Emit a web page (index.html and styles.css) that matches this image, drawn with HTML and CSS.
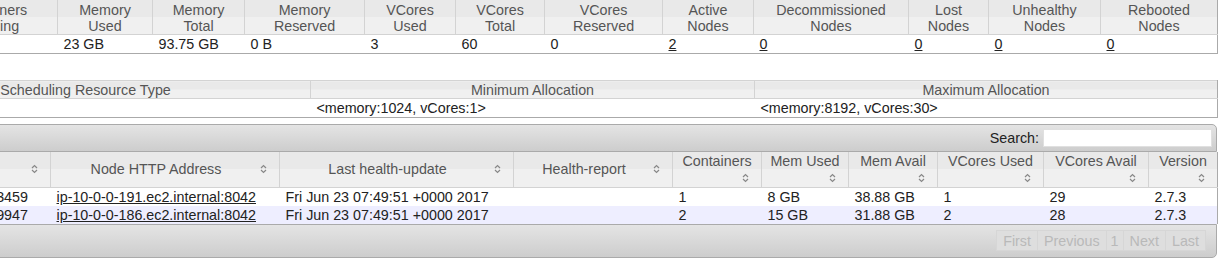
FILE: index.html
```html
<!DOCTYPE html>
<html lang="en">
<head>
  <meta charset="UTF-8">
  <title>Nodes of the cluster</title>
  <link rel="stylesheet" href="styles.css">
</head>
<body>
  <main class="content">

    <!-- Cluster metrics -->
    <table class="info metrics">
      <colgroup>
        <col style="width:130px"><col style="width:95px"><col style="width:92px"><col style="width:120px">
        <col style="width:91px"><col style="width:89px"><col style="width:118px"><col style="width:91px">
        <col style="width:155px"><col style="width:80px"><col style="width:112px"><col style="width:117px">
      </colgroup>
      <thead>
        <tr>
          <th>Containers Running</th>
          <th>Memory Used</th>
          <th>Memory Total</th>
          <th>Memory Reserved</th>
          <th>VCores Used</th>
          <th>VCores Total</th>
          <th>VCores Reserved</th>
          <th>Active Nodes</th>
          <th>Decommissioned Nodes</th>
          <th>Lost Nodes</th>
          <th>Unhealthy Nodes</th>
          <th>Rebooted Nodes</th>
        </tr>
      </thead>
      <tbody>
        <tr>
          <td>3</td>
          <td>23 GB</td>
          <td>93.75 GB</td>
          <td>0 B</td>
          <td>3</td>
          <td>60</td>
          <td>0</td>
          <td><a href="#">2</a></td>
          <td><a href="#">0</a></td>
          <td><a href="#">0</a></td>
          <td><a href="#">0</a></td>
          <td><a href="#">0</a></td>
        </tr>
      </tbody>
    </table>

    <!-- Scheduler metrics -->
    <table class="info scheduler">
      <colgroup>
        <col style="width:450px"><col style="width:444px"><col style="width:463px">
      </colgroup>
      <thead>
        <tr>
          <th>Scheduling Resource Type</th>
          <th>Minimum Allocation</th>
          <th>Maximum Allocation</th>
        </tr>
      </thead>
      <tbody>
        <tr>
          <td>[MEMORY]</td>
          <td>&lt;memory:1024, vCores:1&gt;</td>
          <td>&lt;memory:8192, vCores:30&gt;</td>
        </tr>
      </tbody>
    </table>

    <!-- Nodes table -->
    <div class="nodes-wrapper">
      <div class="toolbar toolbar-top">
        <label class="search">Search: <input type="text"></label>
      </div>
      <table class="nodes">
        <colgroup>
          <col style="width:236px"><col style="width:229px"><col style="width:234px"><col style="width:159px">
          <col style="width:89px"><col style="width:87px"><col style="width:89px"><col style="width:106px">
          <col style="width:105px"><col style="width:69px">
        </colgroup>
        <thead>
          <tr>
            <th><div class="sort-wrap"><span class="label">Node Address</span><svg class="sort" viewBox="0 0 7 10"><path d="M1 4 3.5 1.5 6 4M1 6 3.5 8.5 6 6"/></svg></div></th>
            <th><div class="sort-wrap"><span class="label">Node HTTP Address</span><svg class="sort" viewBox="0 0 7 10"><path d="M1 4 3.5 1.5 6 4M1 6 3.5 8.5 6 6"/></svg></div></th>
            <th><div class="sort-wrap"><span class="label">Last health-update</span><svg class="sort" viewBox="0 0 7 10"><path d="M1 4 3.5 1.5 6 4M1 6 3.5 8.5 6 6"/></svg></div></th>
            <th><div class="sort-wrap"><span class="label">Health-report</span><svg class="sort" viewBox="0 0 7 10"><path d="M1 4 3.5 1.5 6 4M1 6 3.5 8.5 6 6"/></svg></div></th>
            <th><div class="sort-wrap stack"><span class="label">Containers</span><svg class="sort" viewBox="0 0 7 10"><path d="M1 4 3.5 1.5 6 4M1 6 3.5 8.5 6 6"/></svg></div></th>
            <th><div class="sort-wrap stack"><span class="label">Mem Used</span><svg class="sort" viewBox="0 0 7 10"><path d="M1 4 3.5 1.5 6 4M1 6 3.5 8.5 6 6"/></svg></div></th>
            <th><div class="sort-wrap stack"><span class="label">Mem Avail</span><svg class="sort" viewBox="0 0 7 10"><path d="M1 4 3.5 1.5 6 4M1 6 3.5 8.5 6 6"/></svg></div></th>
            <th><div class="sort-wrap stack"><span class="label">VCores Used</span><svg class="sort" viewBox="0 0 7 10"><path d="M1 4 3.5 1.5 6 4M1 6 3.5 8.5 6 6"/></svg></div></th>
            <th><div class="sort-wrap stack"><span class="label">VCores Avail</span><svg class="sort" viewBox="0 0 7 10"><path d="M1 4 3.5 1.5 6 4M1 6 3.5 8.5 6 6"/></svg></div></th>
            <th><div class="sort-wrap stack"><span class="label">Version</span><svg class="sort" viewBox="0 0 7 10"><path d="M1 4 3.5 1.5 6 4M1 6 3.5 8.5 6 6"/></svg></div></th>
          </tr>
        </thead>
        <tbody>
          <tr class="odd">
            <td>ip-10-0-0-191.ec2.internal:33459</td>
            <td><a href="#">ip-10-0-0-191.ec2.internal:8042</a></td>
            <td>Fri Jun 23 07:49:51 +0000 2017</td>
            <td></td>
            <td>1</td>
            <td>8 GB</td>
            <td>38.88 GB</td>
            <td>1</td>
            <td>29</td>
            <td>2.7.3</td>
          </tr>
          <tr class="even">
            <td>ip-10-0-0-186.ec2.internal:39947</td>
            <td><a href="#">ip-10-0-0-186.ec2.internal:8042</a></td>
            <td>Fri Jun 23 07:49:51 +0000 2017</td>
            <td></td>
            <td>2</td>
            <td>15 GB</td>
            <td>31.88 GB</td>
            <td>2</td>
            <td>28</td>
            <td>2.7.3</td>
          </tr>
        </tbody>
      </table>
      <div class="toolbar toolbar-bottom">
        <div class="paging">
          <span class="page-btn">First</span><span class="page-btn">Previous</span><span class="page-btn num">1</span><span class="page-btn">Next</span><span class="page-btn">Last</span>
        </div>
      </div>
    </div>

  </main>
</body>
</html>
```

FILE: styles.css
```css
/* Basic page */
* {
  margin: 0;
  padding: 0;
  box-sizing: border-box;
}

html, body {
  overflow: hidden;
}

body {
  font-family: "Liberation Sans", Arial, sans-serif;
  font-size: 14.3px;
  line-height: 16px;
  color: #222;
  background: #fff;
}

a {
  color: #222;
}

table {
  border-collapse: collapse;
  table-layout: fixed;
}

/* Info tables (metrics, scheduler) */
.info th {
  font-weight: normal;
  color: #555;
  text-align: center;
  background: linear-gradient(to bottom, #e9e9e9 0, #e9e9e9 50%, #f0f0f0 50%, #f0f0f0 100%);
  border-left: 1px solid #d3d3d3;
  border-bottom: 1px solid #d3d3d3;
}

.info td {
  text-align: left;
  padding: 1px 6px;
  white-space: nowrap;
  overflow: hidden;
}

.metrics {
  width: 1290px;
  margin-left: -73px;
  border-right: 1px solid #aaa;
  border-bottom: 1px solid #aaa;
}

.metrics th {
  padding: 2px 10px 0;
}

.scheduler {
  width: 1357px;
  margin-left: -140px;
  margin-top: 26px;
  border-top: 1px solid #d3d3d3;
  border-right: 1px solid #aaa;
  border-bottom: 1px solid #aaa;
}

.scheduler th {
  padding: 1px 3px 0;
}

/* Nodes table */
.nodes-wrapper {
  width: 1403px;
  margin-left: -186px;
  margin-top: 6px;
}

.toolbar {
  border: 1px solid #aaa;
  background: linear-gradient(to bottom, #e4e4e4, #cdcdcd);
  display: flex;
  justify-content: flex-end;
  align-items: center;
}

.toolbar-top {
  height: 28px;
  border-radius: 0 5px 0 0;
  padding-right: 4px;
}

.toolbar-bottom {
  height: 34px;
  border-radius: 0 0 5px 0;
  padding-right: 10px;
}

.search {
  display: flex;
  align-items: center;
  gap: 4px;
}

.search input {
  width: 169px;
  height: 18px;
  border: 1px solid #e0e0e0;
  background: #fff;
  font: inherit;
}

.nodes {
  width: 1403px;
  border-right: 1px solid #aaa;
}

.nodes th {
  font-weight: normal;
  color: #555;
  height: 35px;
  padding: 1px 3px;
  vertical-align: middle;
  background: linear-gradient(to bottom, #e9e9e9 0, #e9e9e9 50%, #f0f0f0 50%, #f0f0f0 100%);
  border-left: 1px solid #d3d3d3;
  border-bottom: 1px solid #d3d3d3;
}

.sort-wrap {
  display: flex;
  align-items: center;
}

.sort-wrap .label {
  flex: 1;
  text-align: center;
}

.sort-wrap.stack {
  flex-direction: column;
  align-items: stretch;
}

.sort {
  width: 7px;
  height: 10px;
  margin: 0 9px 0 2px;
  fill: none;
  stroke: #888;
  stroke-width: 1.2;
  flex-shrink: 0;
}

.stack .sort {
  align-self: flex-end;
  margin: 4px 9px 2px 0;
}

.nodes td {
  padding: 1px 6px;
  height: 18px;
  white-space: nowrap;
  overflow: hidden;
}

.nodes tr.odd td {
  background: #fff;
}

.nodes tr.even td {
  background: #eeeeff;
}

/* Pagination */
.paging {
  display: flex;
}

.page-btn {
  height: 21px;
  padding: 2px 6px 0;
  color: #b9b9b9;
  background: #dedede;
  border: 1px solid #d6d6d6;
  margin-left: -1px;
}

.page-btn.num {
  padding: 2px 4px 0;
}
```
